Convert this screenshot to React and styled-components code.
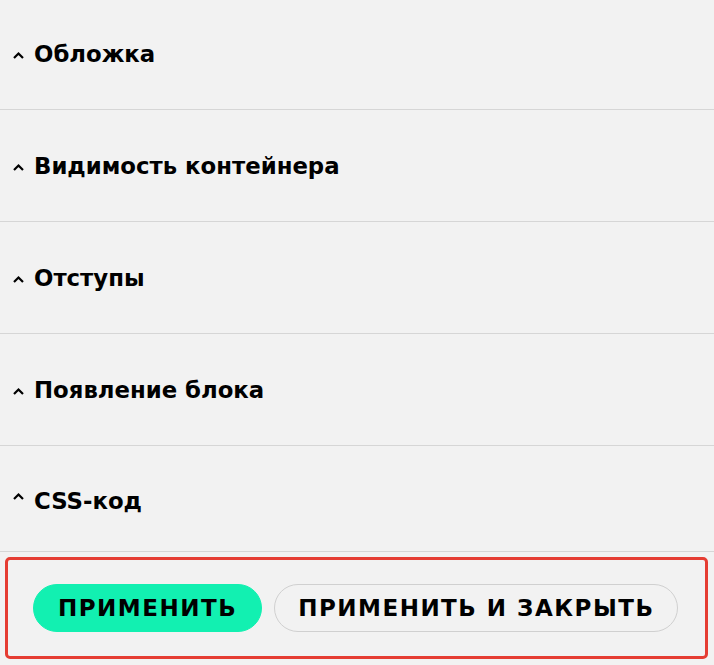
import React from "react";
import styled, { createGlobalStyle } from "styled-components";

const Global = createGlobalStyle`
  html, body { margin: 0; padding: 0; background: #f2f2f2; }
  body { font-family: "DejaVu Sans", sans-serif; color: #000; }
  * { box-sizing: border-box; }
`;

const Panel = styled.div`
  width: 714px;
  height: 665px;
  display: flex;
  flex-direction: column;
  overflow: hidden;
  background: #f2f2f2;
`;

const Sections = styled.div`
  display: flex;
  flex-direction: column;
  margin-top: -2px;
`;

const Section = styled.div`
  height: ${(p) => p.$h}px;
  border-bottom: 1px solid #d6d6d6;
  display: flex;
  align-items: ${(p) => (p.$last ? "flex-start" : "center")};
  padding-top: ${(p) => (p.$last ? 43 : 0)}px;
  padding-left: 12px;
  gap: 9px;
`;

const Title = styled.span`
  font-family: "DejaVu Sans", sans-serif;
  font-size: 22.8px;
  font-weight: 700;
  line-height: 24px;
`;

const Caret = styled.svg`
  width: 13px;
  height: 9px;
  flex: none;
  margin-top: 3px;
`;

const Footer = styled.div`
  margin: 5px 6px 0 5px;
  height: 102px;
  border: 3px solid #e53d33;
  border-radius: 5px;
  display: flex;
  align-items: center;
  padding-left: 25px;
  gap: 12px;
`;

const Button = styled.button`
  height: 48px;
  padding: 0 ${(p) => (p.$primary ? 24 : 23)}px;
  border-radius: 24px;
  border: 1px solid ${(p) => (p.$primary ? "#12f0b1" : "#d0d0d0")};
  background: ${(p) => (p.$primary ? "#12f0b1" : "#f2f2f2")};
  color: #000;
  font-family: "DejaVu Sans", sans-serif;
  font-size: 23px;
  font-weight: 700;
  letter-spacing: 1.5px;
  text-transform: uppercase;
  cursor: pointer;
`;

const items = ["Обложка", "Видимость контейнера", "Отступы", "Появление блока", "CSS-код"];

export default function App() {
  return (
    <>
      <Global />
      <Panel>
        <Sections>
          {items.map((t, i) => (
            <Section key={t} $h={i === items.length - 1 ? 106 : 112} $last={i === items.length - 1}>
              <Caret viewBox="0 0 13 9">
                <path d="M2 7 L6.5 2.5 L11 7" fill="none" stroke="#000" strokeWidth="2.2" />
              </Caret>
              <Title>{t}</Title>
            </Section>
          ))}
        </Sections>
        <Footer>
          <Button $primary>Применить</Button>
          <Button>Применить и закрыть</Button>
        </Footer>
      </Panel>
    </>
  );
}
